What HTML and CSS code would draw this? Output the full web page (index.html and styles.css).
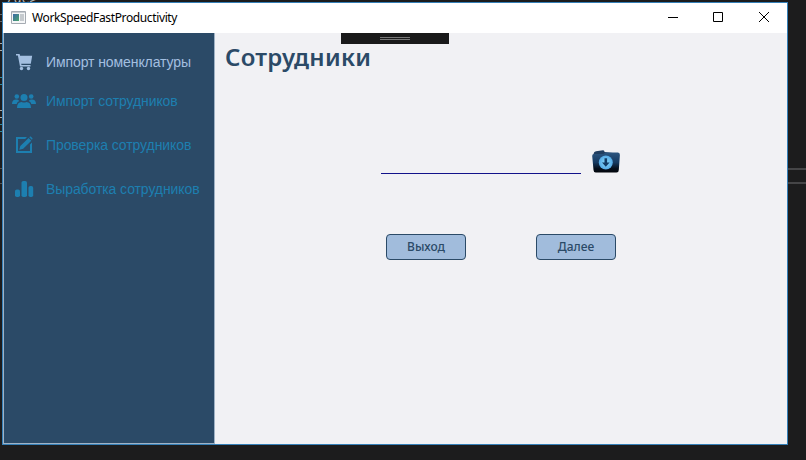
FILE: index.html
```
<!DOCTYPE html>
<html lang="ru">
<head>
<meta charset="utf-8">
<title>WorkSpeedFastProductivity</title>
<link rel="stylesheet" href="styles.css">
</head>
<body>
<div class="editor" aria-hidden="true">
  <span class="code code-top">/de&gt;</span>
  <i class="edge e1"></i><i class="edge e2"></i><i class="edge e3"></i><i class="edge e4"></i><i class="edge e5"></i><i class="edge e6"></i>
  <i class="splitter"></i>
</div>
<div class="window">
  <header class="titlebar">
    <svg class="app-icon" width="15" height="13" viewBox="0 0 15 13">
      <defs><linearGradient id="app" x2="1" y2="1"><stop stop-color="#3c69a8"/><stop offset="1" stop-color="#4aa46c"/></linearGradient></defs>
      <path fill="#f5f6f7" stroke="#a5abb2" d="M.5.5h14v12H.5z"/>
      <path fill="#c9ced3" d="M1 1h13v1H1z"/>
      <path fill="url(#app)" d="M2 3h6v7H2z"/>
      <path fill="#c5cace" d="M9 3h4v7H9z"/>
    </svg>
    <span class="title">WorkSpeedFastProductivity</span>
    <div class="controls">
      <svg width="46" height="30" viewBox="0 0 46 30"><path d="M18 14.5h10"/></svg>
      <svg width="45" height="30" viewBox="0 0 45 30"><path d="M17.5 9.500h9v9h-9z"/></svg>
      <svg width="46" height="30" viewBox="0 0 46 30"><path d="M18 9l10 10m0-10l-10 10"/></svg>
    </div>
  </header>
  <div class="debugbar"><i></i></div>
  <div class="body">
    <nav class="sidebar">
      <a class="item active">
        <svg width="24" height="20" viewBox="0 0 24 20"><path d="M4 2h3.600l.5 1.700H20.200L18.800 11.800H9.200l.3 1.200h9v1.500H8L5.900 3.600H4z"/><circle cx="9.500" cy="16.500" r="1.700"/><circle cx="16.500" cy="16.500" r="1.700"/></svg>
        <span>Импорт номенклатуры</span>
      </a>
      <a class="item">
        <svg width="24" height="20" viewBox="0 0 24 20"><circle cx="4.800" cy="5.500" r="2.300"/><circle cx="19.200" cy="5.500" r="2.300"/><circle cx="12" cy="6.500" r="3.500"/><path d="M0 13c0-3 1.700-4.400 4-4.400 1.500 0 2.400.4 3.200 1.300C5.600 10.700 5 11.700 4.700 13zM24 13c0-3-1.700-4.400-4-4.400-1.500 0-2.400.4-3.200 1.300 1.600.8 2.200 1.800 2.500 3.100zM5 17c0-4 1.600-6 4.600-6 1.500.7 3.300.7 4.800 0 3 0 4.600 2 4.600 6z"/></svg>
        <span>Импорт сотрудников</span>
      </a>
      <a class="item">
        <svg width="24" height="20" viewBox="0 0 24 20"><path d="M4 2h11l-1.800 1.900H6v12h12V9.500L20 7.500V18H4z"/><path d="M16.600 3l2.700 2.700-8.100 8.100-3.900 1 1-3.900zM17.300 2.300l.5-.5c.4-.3.800-.3 1.200 0l1.300 1.300c.3.400.3.800 0 1.200l-.5.500z"/></svg>
        <span>Проверка сотрудников</span>
      </a>
      <a class="item">
        <svg width="24" height="20" viewBox="0 0 24 20"><rect x="3" y="10.500" width="5" height="7.500" rx="1.800"/><rect x="9.500" y="2" width="5.500" height="16" rx="1.800"/><rect x="16.500" y="7" width="4.700" height="11" rx="1.800"/></svg>
        <span>Выработка сотрудников</span>
      </a>
    </nav>
    <main class="content">
      <h1>Сотрудники</h1>
      <div class="file-row">
        <input class="path" type="text" aria-label="Файл">
        <svg width="28" height="24" viewBox="0 0 28 24">
          <defs>
            <linearGradient id="folder" x2="0" y2="1"><stop stop-color="#2c5680"/><stop offset=".5" stop-color="#163a61"/><stop offset=".8" stop-color="#06101d"/><stop offset="1" stop-color="#02050a"/></linearGradient>
            <radialGradient id="disc"><stop stop-color="#8cdcff"/><stop offset="1" stop-color="#53a9e5"/></radialGradient>
          </defs>
          <path fill="#203e60" d="M1.500 4Q2 1.300 4 1.300L11 .3Q12.300.1 12.600 2L25 3.500V8H1.500z"/>
          <path fill="url(#folder)" d="M2 4h9.500l1.700-1.600H26Q28 2.500 27.900 5L26.800 20Q26.700 22.500 24.500 22.500H3.700Q1.700 22.500 1.500 20L.2 6Q.1 4 2 4z"/>
          <circle cx="13.800" cy="12.500" r="7" fill="url(#disc)"/>
          <path fill="#123c66" d="M12.500 8.200h2.600v4.400h2.500L13.800 16.800l-3.800-4.200h2.500z"/>
        </svg>
      </div>
      <div class="actions">
        <button>Выход</button>
        <button>Далее</button>
      </div>
    </main>
  </div>
</div>
</body>
</html>
```
FILE: styles.css
```
* { box-sizing: border-box; }
body {
  margin: 0;
  width: 806px;
  height: 460px;
  padding: 2px;
  overflow: hidden;
  position: relative;
  background: #1c1c1d;
  font-family: "Noto Sans", sans-serif;
}
.code { position: absolute; left: 6px; top: -8px; font: 13px/13px "DejaVu Sans Mono", monospace; color: #b8b8b8; }
.edge { position: absolute; left: 0; width: 2px; height: 8px; border: solid #aaa; border-width: 1px 0; }
.e1 { top: 14px; border-color: #666; }
.e2 { top: 43px; }
.e3 { top: 77px; border-color: #348b9c; }
.e4 { top: 110px; }
.e5 { top: 124px; border-color: #348b9c; }
.e6 { top: 168px; height: 16px; border-color: #555; }
.splitter { position: absolute; left: 788px; right: 0; top: 168px; height: 16px; border: solid #454547; border-width: 2px 0; }
.window {
  position: relative;
  width: 786px;
  height: 443px;
  border: 1px solid #3580b8;
  background: #f1f1f4;
  display: flex;
  flex-direction: column;
}
.titlebar { height: 30px; flex: none; display: flex; align-items: center; padding-left: 8px; background: #fff; }
.app-icon { margin-top: -2px; }
.title { margin: 0 0 0 6px; font-size: 12px; line-height: 16px; color: #000; white-space: nowrap; letter-spacing: -.37px; }
.controls { display: flex; margin-left: auto; }
.controls svg { display: block; fill: none; stroke: #000; stroke-width: 1; }
.debugbar { position: absolute; left: 338px; top: 30px; width: 108px; height: 11px; background: #1a1a1a; display: flex; justify-content: center; align-items: center; }
.debugbar i { width: 30px; height: 3px; border: solid #777; border-width: 1px 0; }
.body { flex: 1; display: flex; min-height: 0; }
.sidebar {
  width: 212px;
  border: solid #9fb2c5;
  border-width: 0 1px 1px;
  background: #2b4a67;
  padding-top: 19px;
}
.item { display: flex; align-items: center; height: 20px; margin-bottom: 24px; padding-left: 8px; gap: 10px; color: #1d7fb0; font: 14px/20px "Liberation Sans", Arial, sans-serif; letter-spacing: -.09px; white-space: nowrap; }
.item svg { fill: currentColor; flex: none; }
.item.active { color: #a3bfe0; margin-bottom: 19px; }
.content { flex: 1; display: flex; flex-direction: column; align-items: flex-start; }
h1 { margin: 4px 0 0 10px; font-size: 24px; line-height: 40px; font-weight: 600; color: #2b4a67; white-space: nowrap; letter-spacing: .25px; }
.file-row { display: flex; gap: 11px; margin: 73px 0 0 166px; height: 24px; }
.path { width: 200px; height: 24px; border: 0; border-bottom: 1px solid #12128a; background: none; padding: 0; outline: 0; }
.actions { display: flex; gap: 70px; margin: 60px 0 0 171px; }
button { width: 80px; height: 26px; padding: 0; border: 1px solid #2b4a67; border-radius: 4px; background: #a1bcdc; color: #2b4a67; font: 500 12px/22px "Noto Sans", sans-serif; }
```
